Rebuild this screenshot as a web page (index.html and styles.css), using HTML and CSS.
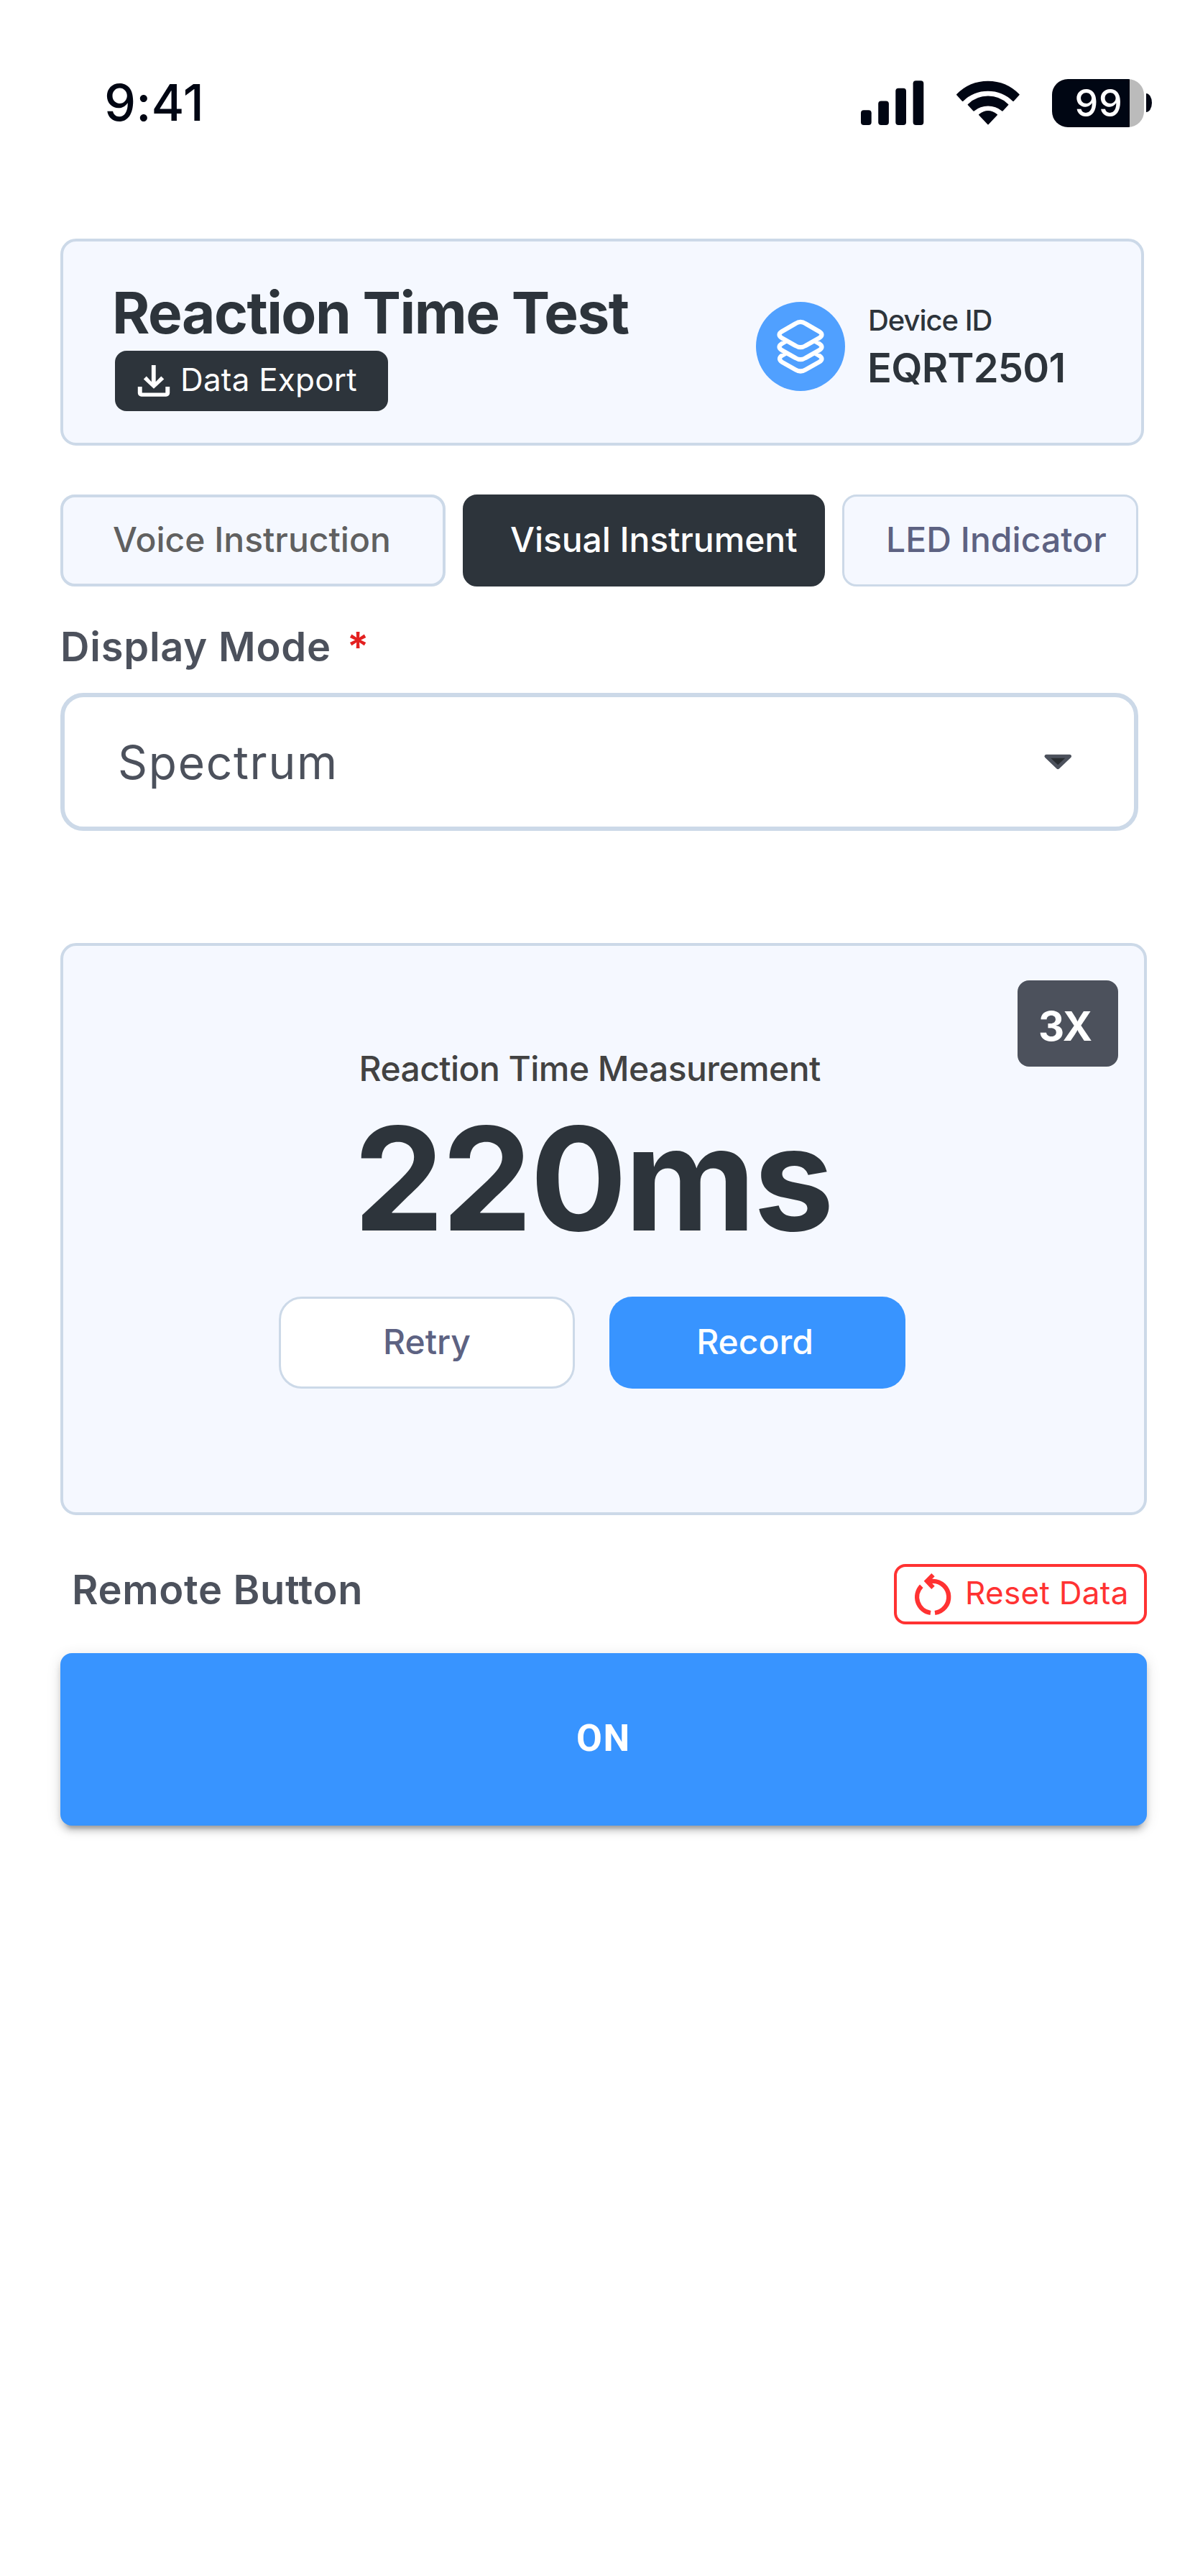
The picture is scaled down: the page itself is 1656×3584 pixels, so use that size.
FILE: index.html
```html
<!DOCTYPE html>
<html lang="en">
<head>
<meta charset="utf-8">
<title>Reaction Time Test</title>
<link rel="stylesheet" href="styles.css">
</head>
<body>
<div class="status">
  <span class="time">9:41</span>
  <svg class="signal" viewBox="1198 110 88 67"><rect x="1198" y="153.3" width="14.7" height="20.7" rx="4"/><rect x="1222.2" y="140.5" width="14.7" height="33.5" rx="4"/><rect x="1246.3" y="122.7" width="14.7" height="51.3" rx="4"/><rect x="1270.6" y="112.3" width="14.7" height="61.7" rx="4"/></svg>
  <svg class="wifi" viewBox="453 60 264 201"><path d="M456 125A180 180 0 0 1 713 125L690 150A152 152 0 0 0 479 150ZM503 167A118 118 0 0 1 667 167L645 191A95 95 0 0 0 525 191ZM549 209Q585 181 621 209L585 247Z"/></svg>
  <div class="battery"><span>99</span></div>
  <i class="nub"></i>
</div>

<main class="screen">
  <header class="head panel">
    <div class="head-main">
      <h1>Reaction Time Test</h1>
      <button class="export"><svg viewBox="190 488 48 84"><path d="M210.9 508h5.8v23.3l7.6-7.7 4 4L214 540.8 199.8 527.6l4-4 7.1 7.7zM191.8 538h5.9v8.4h32.6V538h5.9v8.7a5 5 0 0 1-5 5h-34.4a5 5 0 0 1-5-5z"/></svg><span>Data Export</span></button>
    </div>
    <div class="device">
      <div class="disc"><svg viewBox="1052 420 124 124"><path d="M1107 450.3Q1114 445.5 1121 450.3L1140 461.2Q1147 465.7 1140 470.2L1121 481Q1114 485.4 1107 481L1088 470.2Q1081 465.7 1088 461.2ZM1094 474.6L1088 478.2Q1081 482.7 1088 487.2L1107 498Q1114 502.4 1121 498L1140 487.2Q1147 482.7 1140 478.2L1134 474.6M1094 491.4L1088 494.8Q1082 499.2 1088 503.6L1107 514.4Q1114 518.6 1121 514.4L1140 503.6Q1147 499.2 1140 494.8L1134 491.4"/></svg></div>
      <div class="device-text"><span class="device-label">Device ID</span><strong>EQRT2501</strong></div>
    </div>
  </header>

  <nav class="tabs">
    <button class="tab voice">Voice Instruction</button>
    <button class="tab visual">Visual Instrument</button>
    <button class="tab led">LED Indicator</button>
  </nav>

  <label class="label">Display Mode<span class="req">*</span></label>
  <div class="select"><span>Spectrum</span><svg viewBox="1450 1046 44 28"><path d="M1456 1052.2H1488.5L1472.2 1067.6Z"/></svg></div>

  <section class="measure panel">
    <span class="badge">3X</span>
    <p class="caption">Reaction Time Measurement</p>
    <p class="value">220ms</p>
    <div class="actions">
      <button class="retry">Retry</button>
      <button class="record">Record</button>
    </div>
  </section>

  <div class="remote">
    <h2>Remote Button</h2>
    <button class="reset"><svg viewBox="1270 2180 56 76"><path class="arc" d="M1296.5 2199.8H1298.2A22.2 22.2 0 0 1 1301 2244M1295 2244A22.2 22.2 0 0 1 1282.3 2206.7"/><path class="tip" d="M1285.7 2199.7L1296.3 2189 1300.7 2193.3 1297 2197V2202.8L1300.7 2206.7 1296.3 2211Z"/></svg><span>Reset Data</span></button>
  </div>
  <button class="power">ON</button>
</main>
</body>
</html>
```
FILE: styles.css
```css
* { box-sizing: border-box; }
body { margin: 0; min-height: 3584px; background: #fff; color: #2d343b; font-family: Inter, "Liberation Sans", sans-serif; }
button { margin: 0; padding: 0; border: 0; font: inherit; color: inherit; }
h1, h2, p { margin: 0; }
svg { display: block; flex: none; }

/* Status bar */
.status { display: flex; height: 332px; padding: 110px 0 0 145px; color: #000613; }
.time { width: 1053px; font-size: 70px; font-weight: 500; line-height: 65px; letter-spacing: 0.1px; }
.signal { width: 88px; height: 67px; margin-right: 45px; fill: #000613; }
.wifi { width: 88px; height: 67px; margin-right: 45px; fill: #000613; stroke: #000613; stroke-width: 6; stroke-linejoin: round; }
.battery { width: 128px; height: 67px; padding-left: 31.5px; border-radius: 22px; background: linear-gradient(90deg, #000613 108px, #bbb 108px); color: #fff; font-size: 52px; font-weight: 500; line-height: 68px; letter-spacing: 0.8px; }
.nub { width: 8px; height: 26px; margin: 20px 0 0 3px; border-radius: 0 8px 8px 0 / 0 13px 13px 0; background: #000613; }

.screen { width: 1512px; margin-left: 84px; }
.panel { border: 4px solid #ccd9e8; border-radius: 22px; background: #f5f8ff; }

/* Header card */
.head { display: flex; width: 1508px; height: 288px; }
.head-main { width: 964px; padding: 51px 0 0 68px; }
h1 { font-size: 80px; font-weight: 700; line-height: 96px; letter-spacing: -1.52px; }
.export { display: flex; width: 380px; height: 84px; margin: 5px 0 0 4px; padding-left: 30px; gap: 13px; border-radius: 16px; background: #2d343b; color: #fff; font-size: 44px; font-weight: 400; line-height: 80px; letter-spacing: 0.2px; }
.export svg { width: 48px; height: 84px; fill: #fff; }
.device { display: flex; gap: 31px; padding-top: 84px; }
.disc { width: 124px; height: 124px; border-radius: 50%; background: #50a0ff; }
.disc path { fill: none; stroke: #fff; stroke-width: 6.2; stroke-linejoin: round; }
.device-text { display: flex; flex-direction: column; gap: 6px; padding-top: 2px; }
.device-label { padding-left: 1px; font-size: 40px; font-weight: 500; line-height: 48px; letter-spacing: -1.03px; }
.device-text strong { font-size: 56px; font-weight: 600; line-height: 72px; letter-spacing: -0.75px; }

/* Tabs */
.tabs { display: flex; gap: 24px; margin-top: 68px; }
.tab { height: 128px; padding-bottom: 3px; border: 4px solid #ccd9e8; border-radius: 20px; background: #f5f8ff; font-size: 48px; font-weight: 500; text-align: left; white-space: nowrap; }
.voice { width: 536px; padding-left: 69px; color: #606060; }
.visual { width: 504px; padding-left: 62px; border-color: #2d343b; background: #2d343b; color: #fff; letter-spacing: -0.07px; }
.led { width: 412px; padding-left: 58px; border-width: 3px; color: #5d6282; letter-spacing: 0.06px; }

/* Display mode */
.label { display: block; margin-top: 48px; font-size: 56px; font-weight: 600; line-height: 72px; letter-spacing: 0.78px; color: #4c515c; }
.req { margin-left: 22px; color: #e32020; }
.select { display: flex; align-items: center; justify-content: space-between; width: 1500px; height: 192px; margin-top: 28px; padding: 0 84px 0 74px; border: 6px solid #ccd9e8; border-radius: 32px; font-size: 64px; line-height: 80px; letter-spacing: 1.71px; color: #4c515c; }
.select span { padding-top: 2px; }
.select svg { width: 44px; height: 28px; fill: #282c30; stroke: #4c515c; stroke-width: 5; stroke-linejoin: round; }

/* Measurement card */
.measure { position: relative; height: 796px; margin-top: 156px; padding-top: 141px; }
.badge { position: absolute; top: 48px; right: 36px; width: 140px; height: 120px; padding: 7px 0 0 29px; border-radius: 16px; background: #4c515c; color: #fff; font-size: 56px; font-weight: 700; line-height: 114px; letter-spacing: -1.2px; }
.caption { margin-left: 411.5px; font-size: 48px; font-weight: 500; line-height: 60px; letter-spacing: -0.57px; color: #424242; }
.value { margin: 2px 0 45px 404px; font-size: 200px; font-weight: 700; line-height: 240px; letter-spacing: -3.16px; }
.actions { display: flex; gap: 48px; margin-left: 300px; }
.actions button { width: 412px; height: 128px; padding-bottom: 3px; border-radius: 32px; font-size: 48px; font-weight: 500; }
.actions .retry { border: 3px solid #ccd9e8; background: #fff; color: #5d6282; }
.actions .record { padding-right: 7px; background: #3894ff; color: #fff; }

/* Remote button */
.remote { display: flex; justify-content: space-between; margin-top: 68px; padding-left: 16px; }
h2 { font-size: 56px; font-weight: 600; line-height: 72px; letter-spacing: 0.65px; color: #4c515c; }
.reset { display: flex; width: 352px; height: 84px; padding-left: 22px; gap: 17px; border: 4px solid #ff3232; border-radius: 16px; background: #fff; color: #ff3232; font-size: 44px; font-weight: 400; line-height: 72px; letter-spacing: 0.3px; white-space: nowrap; }
.reset svg { width: 56px; height: 76px; }
.arc { fill: none; stroke: #ff3232; stroke-width: 6.3; }
.tip { fill: #ff3232; }
.power { display: block; width: 1512px; height: 240px; margin-top: 40px; padding-bottom: 4px; border-radius: 16px; background: #3894ff; box-shadow: 0 12px 4px -8px rgba(0, 0, 0, 0.2), 0 8px 8px rgba(0, 0, 0, 0.14), 0 4px 20px rgba(0, 0, 0, 0.12); color: #fff; font-family: Roboto, Inter, sans-serif; font-size: 52px; font-weight: 700; letter-spacing: 1.84px; }
```
